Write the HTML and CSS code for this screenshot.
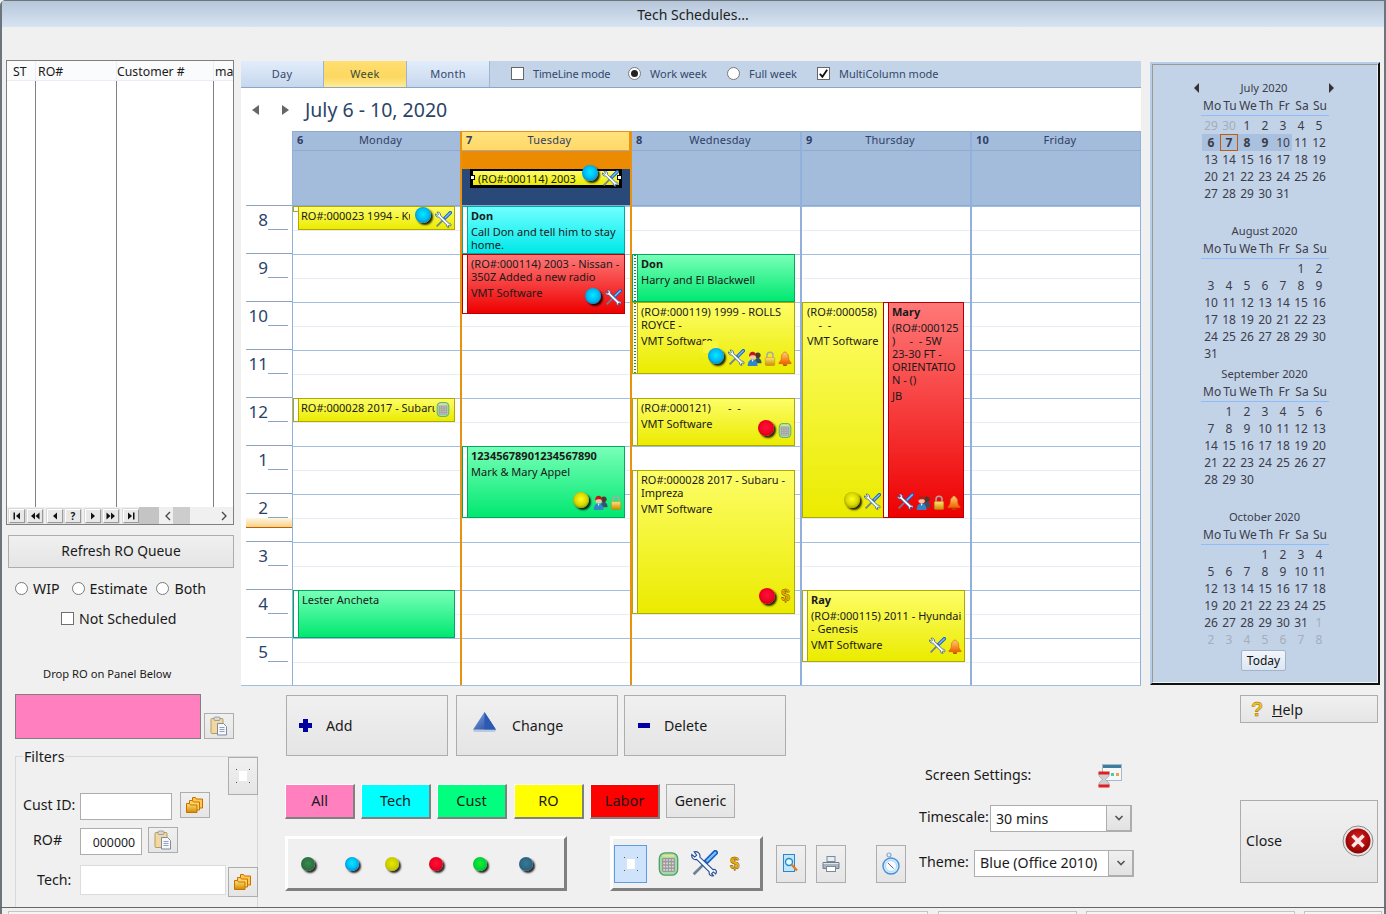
FILE: index.html
```html
<!DOCTYPE html>
<html lang="en">
<head>
<meta charset="utf-8">
<title>Tech Schedules...</title>
<link rel="stylesheet" href="styles.css">
</head>
<body>
<svg class="defs" width="0" height="0" aria-hidden="true">
  <defs>
    <linearGradient id="g-gold" x1="0" y1="0" x2="0" y2="1"><stop offset="0" stop-color="#ffe27a"/><stop offset="1" stop-color="#d08a00"/></linearGradient>
    <linearGradient id="g-bell" x1="0" y1="0" x2="0" y2="1"><stop offset="0" stop-color="#ffd27a"/><stop offset="1" stop-color="#f06000"/></linearGradient>
    <linearGradient id="g-tri" x1="0" y1="0" x2="1" y2="1"><stop offset="0" stop-color="#7fa8e8"/><stop offset="1" stop-color="#1c3f94"/></linearGradient>
    <radialGradient id="g-close" cx=".5" cy=".4" r=".6"><stop offset="0" stop-color="#e02020"/><stop offset="1" stop-color="#8c0000"/></radialGradient>
    <symbol id="i-tools" viewBox="0 0 20 20">
      <path d="M18 2 11 9" stroke="#1a5fc0" stroke-width="4" stroke-linecap="round" fill="none"/>
      <path d="M18 2 12 8" stroke="#7cc0ff" stroke-width="1.6" stroke-linecap="round" fill="none"/>
      <path d="M11 9 2 18" stroke="#6f7f95" stroke-width="2" fill="none"/>
      <path d="M2.500 1.500c2.600-.8 5 1.400 4.400 4l10.300 9.800c.9-.3 2 0 2.500 1 .4.900-.1 1.700-.5 2.300l-1.800-1.500-1.400 1.400 1.500 1.600c-2 .6-3.800-1-3.300-3L4.400 7.300C2.300 8 .2 6.200.6 3.600l2.300 1.900 1.500-1.500z" fill="#f4f8ff" stroke="#2b4f96" stroke-width=".9" transform="scale(.95)"/>
    </symbol>
    <symbol id="i-calc" viewBox="0 0 16 18">
      <rect x="1" y=".5" width="14" height="17" rx="4.500" fill="#a9d8a9" stroke="#4aa36a"/>
      <rect x="3.500" y="2" width="9" height="1.500" fill="#e8e28a"/>
      <rect x="3" y="4.500" width="10" height="10.500" rx="1" fill="#9a9a9a"/>
      <path d="M4 6h8M4 8.500h8M4 11h8M4 13.500h8" stroke="#d8d8d8" stroke-width="1.200" stroke-dasharray="1.400 .8"/>
    </symbol>
    <symbol id="i-people" viewBox="0 0 16 16">
      <circle cx="11.500" cy="4.500" r="3" fill="#4a3a30"/>
      <path d="M8 13c0-4 1.500-5.500 3.500-5.500S15.500 9 15.500 13z" fill="#38506a"/>
      <circle cx="6" cy="5.500" r="3.400" fill="#f0c8a8"/>
      <path d="M2.300 6C2 2 4.500.8 6 .8S10 2 9.700 6C8.500 4 4.500 4 2.300 6z" fill="#c01818"/>
      <path d="M.8 16c0-5 2.500-7.200 5.200-7.200s5.200 2.200 5.200 7.200z" fill="#2f86c8"/>
      <path d="M5 9h2l-1 3z" fill="#fff"/>
    </symbol>
    <symbol id="i-lock" viewBox="0 0 12 16">
      <path d="M2.800 8V4.500a3.200 3.200 0 0 1 6.400 0V8" fill="none" stroke="#a8a8a8" stroke-width="1.600"/>
      <rect x="1" y="7" width="10" height="8.500" rx="1" fill="url(#g-gold)" stroke="#b88a00" stroke-width=".5"/>
    </symbol>
    <symbol id="i-bell" viewBox="0 0 14 16">
      <path d="M7 1c1 0 1.500.6 1.500 1.300C10.500 3 11 5 11 8c0 2 1.500 3.500 2.500 4.500v1H.5v-1C1.500 11.500 3 10 3 8c0-3 .5-5 2.500-5.700C5.500 1.600 6 1 7 1z" fill="url(#g-bell)" stroke="#d85a00" stroke-width=".6"/>
      <path d="M4.500 14h5a2.500 2 0 0 1-5 0z" fill="#b84800"/>
    </symbol>
    <symbol id="i-folder" viewBox="0 0 18 18">
      <path d="M6.500 1.500h3l1 1.500h6v9h-10z" fill="#ffc850" stroke="#c87000"/>
      <path d="M3.500 4.500h3l1 1.500h6v8h-10z" fill="#ffd464" stroke="#c87000"/>
      <path d="M.5 7.500h3l1 1.500h6.500v7.500H.5z" fill="url(#g-gold)" stroke="#c87000"/>
    </symbol>
    <symbol id="i-clip" viewBox="0 0 18 20">
      <rect x="1" y="2.500" width="12" height="15" rx="1" fill="#f0d8a0" stroke="#b89a60"/>
      <rect x="4" y="1" width="6" height="3.500" rx="1" fill="#d8d8d8" stroke="#8a8a8a" stroke-width=".7"/>
      <path d="M7.500 7.500h6l3 3v8.500h-9z" fill="#f6f8fc" stroke="#7d8aa0"/>
      <path d="M9.500 11.500h5M9.500 13.500h5M9.500 15.500h5" stroke="#8ea0c0"/>
    </symbol>
    <symbol id="i-mag" viewBox="0 0 16 20">
      <rect x=".5" y=".5" width="11" height="17" fill="#bfe6fb" stroke="#2a86d0"/>
      <circle cx="6" cy="8" r="3.500" fill="#e8f8ff" stroke="#1f8ec8" stroke-width="1.400"/>
      <path d="M8.500 10.500 14 16.500" stroke="#e8781c" stroke-width="2.200"/>
    </symbol>
    <symbol id="i-print" viewBox="0 0 18 18">
      <rect x="5" y="1.500" width="8" height="5" fill="#e6eef4" stroke="#7a8a98"/>
      <path d="M1 7.500h16v6H1z" fill="#a8b4bf" stroke="#6f7d8a"/>
      <rect x="4.500" y="11.500" width="9" height="5" fill="#fff" stroke="#7a8a98"/>
      <path d="M1.500 8.500h15" stroke="#dfe6ec"/>
    </symbol>
    <symbol id="i-watch" viewBox="0 0 18 24">
      <circle cx="7" cy="3" r="2" fill="none" stroke="#86a6d8" stroke-width="1.200"/>
      <circle cx="9" cy="14" r="8" fill="#cfeaff" stroke="#4a90d8" stroke-width="1.400"/>
      <circle cx="9" cy="14" r="5.500" fill="#f4fbff" stroke="#9cc8ee" stroke-width=".7"/>
      <path d="M6 11l3 3" stroke="#c04848" stroke-width="1"/>
      <path d="M9 14l2.500 2.500" stroke="#3a6aa8" stroke-width="1"/>
    </symbol>
    <symbol id="i-settings" viewBox="0 0 24 24">
      <rect x="4.500" y=".5" width="19" height="16" fill="#f4f8fb" stroke="#a7b8c6"/>
      <rect x="5" y="1" width="18" height="3" fill="#3a7f9f"/>
      <rect x="13" y="9" width="3" height="3" fill="#50c8a0"/>
      <rect x="18" y="9" width="3" height="3" fill="#f0a040"/>
      <path d="M1 9h10v3L7.500 15.500 11 19v3H1v-3l3.500-3.500L1 12z" fill="#cfcfcf" stroke="#8a8a8a" stroke-width=".5"/>
      <rect x=".5" y="7.500" width="11" height="3" fill="#e02020"/>
      <rect x=".5" y="20.500" width="11" height="3" fill="#e02020"/>
    </symbol>
    <symbol id="i-close" viewBox="0 0 32 32">
      <circle cx="16" cy="16" r="15" fill="#e8e8e8" stroke="#8a8a8a"/>
      <circle cx="16" cy="16" r="12.500" fill="url(#g-close)"/>
      <path d="M10.500 10.500l11 11M21.500 10.500l-11 11" stroke="#f4e8e8" stroke-width="3.600"/>
    </symbol>
    <symbol id="i-tri" viewBox="0 0 22 20">
      <path d="M11 0 22 17H0z" fill="url(#g-tri)"/>
      <path d="M11 0 22 17H11z" fill="#2c59b4"/>
      <path d="M0 17h22l-1 2H1z" fill="#bcc8dc"/>
    </symbol>
    <symbol id="i-first" viewBox="0 0 10 10"><path d="M1.500 1.500h1.500v7H1.500zM8 1.500v7L4 5z"/></symbol>
    <symbol id="i-prevp" viewBox="0 0 10 10"><path d="M5 1.500v7L1 5zM9.500 1.500v7L5.500 5z"/></symbol>
    <symbol id="i-prev" viewBox="0 0 10 10"><path d="M7 1.500v7L3 5z"/></symbol>
    <symbol id="i-next" viewBox="0 0 10 10"><path d="M3 1.500v7L7 5z"/></symbol>
    <symbol id="i-nextp" viewBox="0 0 10 10"><path d="M.5 1.500v7l4-3.500zM5 1.500v7L9 5z"/></symbol>
    <symbol id="i-last" viewBox="0 0 10 10"><path d="M2 1.500v7L6 5zM7 1.500h1.500v7H7z"/></symbol>
    <symbol id="i-chev-l" viewBox="0 0 8 10"><path d="M6 1 2 5l4 4" fill="none" stroke="#444" stroke-width="1.300"/></symbol>
    <symbol id="i-chev-r" viewBox="0 0 8 10"><path d="M2 1l4 4-4 4" fill="none" stroke="#444" stroke-width="1.300"/></symbol>
    <symbol id="i-chev-d" viewBox="0 0 10 8"><path d="M1.500 2 5 5.500 8.500 2" fill="none" stroke="#555" stroke-width="1.600"/></symbol>
    <symbol id="i-check" viewBox="0 0 12 12"><path d="M2 6.500 4.800 9.500 10 2" fill="none" stroke="#111" stroke-width="2"/></symbol>
  </defs>
</svg>

<div class="window">
  <header class="titlebar">Tech Schedules...</header>

  <div class="upper">
    <section class="left-col">
      <div class="queue">
        <div class="queue-grid">
          <div class="qcol qcol-st"><div class="qhead">ST</div></div>
          <div class="qcol qcol-ro"><div class="qhead">RO#</div></div>
          <div class="qcol qcol-cust"><div class="qhead">Customer #</div></div>
          <div class="qcol qcol-ma"><div class="qhead">ma</div></div>
        </div>
        <div class="queue-foot">
          <div class="qnav">
            <span class="qbtn"><svg class="qglyph"><use href="#i-first"/></svg></span>
            <span class="qbtn"><svg class="qglyph"><use href="#i-prevp"/></svg></span>
            <span class="qbtn qbtn-sp"><svg class="qglyph"><use href="#i-prev"/></svg></span>
            <span class="qbtn">?</span>
            <span class="qbtn qbtn-sp"><svg class="qglyph"><use href="#i-next"/></svg></span>
            <span class="qbtn"><svg class="qglyph"><use href="#i-nextp"/></svg></span>
            <span class="qbtn qbtn-sp"><svg class="qglyph"><use href="#i-last"/></svg></span>
          </div>
          <div class="qgap"></div>
          <div class="qscroll">
            <svg class="qchev"><use href="#i-chev-l"/></svg>
            <span class="qthumb"></span>
            <svg class="qchev"><use href="#i-chev-r"/></svg>
          </div>
        </div>
      </div>
      <button class="btn btn-refresh">Refresh RO Queue</button>
      <div class="radios">
        <label class="opt"><i class="radio"></i>WIP</label>
        <label class="opt"><i class="radio"></i>Estimate</label>
        <label class="opt opt-both"><i class="radio"></i>Both</label>
      </div>
      <label class="opt notsched"><i class="check"></i>Not Scheduled</label>
      <div class="droplabel">Drop RO on Panel Below</div>
    </section>

    <section class="scheduler">
      <div class="sched-bar">
        <div class="tab">Day</div>
        <div class="tab tab-active">Week</div>
        <div class="tab">Month</div>
        <div class="sched-opts">
          <span class="sopt sopt-tl"><i class="check check-sm"></i>TimeLine mode</span>
          <span class="sopt sopt-ww"><i class="radio radio-on"></i>Work week</span>
          <span class="sopt sopt-fw"><i class="radio"></i>Full week</span>
          <span class="sopt sopt-mc"><i class="check check-sm"><svg class="checkmark"><use href="#i-check"/></svg></i>MultiColumn mode</span>
        </div>
      </div>
      <div class="sched-nav">
        <i class="tri tri-l"></i>
        <i class="tri tri-r"></i>
        <h1 class="date-title">July 6 - 10, 2020</h1>
      </div>
      <div class="sched-grid">
        <div class="times">
          <div class="hour"><span>8</span></div>
          <div class="hour"><span>9</span></div>
          <div class="hour"><span>10</span></div>
          <div class="hour"><span>11</span></div>
          <div class="hour"><span>12</span></div>
          <div class="hour"><span>1</span></div>
          <div class="hour hour-now"><span>2</span></div>
          <div class="hour"><span>3</span></div>
          <div class="hour"><span>4</span></div>
          <div class="hour"><span>5</span></div>
        </div>

        <div class="day day-mon">
          <div class="day-head"><b>6</b><span>Monday</span></div>
          <div class="allday"></div>
          <div class="day-body">
            <div class="ev ev-y ev-notag" style="top:0;height:24px;left:5px;width:157px"><i class="tag-mini"></i><div class="oneline oneline-a">RO#:000023 1994 - Ku</div><div class="icons icons-top"><i class="ball ball-cyan"></i><svg class="ic ic-tools"><use href="#i-tools"/></svg></div></div>
            <div class="ev ev-y" style="top:192px;height:24px;left:0;width:162px"><i class="tag"></i><div class="oneline oneline-b">RO#:000028 2017 - Subaru</div><div class="icons icons-top"><svg class="ic ic-calc"><use href="#i-calc"/></svg></div></div>
            <div class="ev ev-g" style="top:384px;height:48px;left:0;width:162px"><i class="tag"></i><div class="ev-text"><p>Lester Ancheta</p></div></div>
          </div>
        </div>

        <div class="day day-today">
          <div class="day-head"><b>7</b><span>Tuesday</span></div>
          <div class="allday">
            <div class="allday-orange"></div>
            <div class="allday-navy">
              <div class="adev">
                <i class="handle handle-l"></i><i class="handle handle-r"></i>
                <span>(RO#:000114) 2003</span>
                <i class="ball ball-cyan ball-clip"></i><svg class="ic ic-tools"><use href="#i-tools"/></svg>
              </div>
            </div>
          </div>
          <div class="day-body">
            <div class="ev ev-c" style="top:0;height:48px;left:0;width:163px"><i class="tag"></i><div class="ev-text"><p><b>Don</b></p><p>Call Don and tell him to stay<br>home.</p></div></div>
            <div class="ev ev-r" style="top:48px;height:60px;left:0;width:163px"><i class="tag"></i><div class="ev-text"><p>(RO#:000114) 2003 - Nissan -<br>350Z Added a new radio</p><p>VMT Software</p></div><div class="icons"><i class="ball ball-cyan"></i><svg class="ic ic-tools"><use href="#i-tools"/></svg></div></div>
            <div class="ev ev-g" style="top:240px;height:72px;left:0;width:163px"><i class="tag"></i><div class="ev-text"><p><b>12345678901234567890</b></p><p>Mark &amp; Mary Appel</p></div><div class="icons"><i class="ball ball-yellow"></i><svg class="ic ic-people"><use href="#i-people"/></svg><svg class="ic ic-lock"><use href="#i-lock"/></svg></div></div>
          </div>
        </div>

        <div class="day day-after-today">
          <div class="day-head"><b>8</b><span>Wednesday</span></div>
          <div class="allday"></div>
          <div class="day-body">
            <div class="ev ev-g" style="top:48px;height:48px;left:0;width:163px"><i class="tag tag-dots"></i><div class="ev-text"><p><b>Don</b></p><p>Harry and El Blackwell</p></div></div>
            <div class="ev ev-y" style="top:96px;height:72px;left:0;width:163px"><i class="tag tag-dots"></i><div class="ev-text"><p>(RO#:000119) 1999 - ROLLS<br>ROYCE -</p><p>VMT Software</p></div><i class="text-mask"></i><div class="icons"><i class="ball ball-cyan"></i><svg class="ic ic-tools"><use href="#i-tools"/></svg><svg class="ic ic-people"><use href="#i-people"/></svg><svg class="ic ic-lock"><use href="#i-lock"/></svg><svg class="ic ic-bell"><use href="#i-bell"/></svg></div></div>
            <div class="ev ev-y" style="top:192px;height:48px;left:0;width:163px"><i class="tag"></i><div class="ev-text"><p>(RO#:000121)&nbsp; &nbsp; &nbsp; -&nbsp; -</p><p>VMT Software</p></div><div class="icons"><i class="ball ball-red"></i><svg class="ic ic-calc"><use href="#i-calc"/></svg></div></div>
            <div class="ev ev-y" style="top:264px;height:144px;left:0;width:163px"><i class="tag"></i><div class="ev-text"><p>RO#:000028 2017 - Subaru -<br>Impreza</p><p>VMT Software</p></div><div class="icons"><i class="ball ball-red"></i><span class="dollar dollar-sm">$</span></div></div>
          </div>
        </div>

        <div class="day">
          <div class="day-head"><b>9</b><span>Thursday</span></div>
          <div class="allday"></div>
          <div class="day-body">
            <div class="ev ev-y ev-plain" style="top:96px;height:216px;left:0;width:82px"><div class="ev-text"><p>(RO#:000058)<br>&nbsp; &nbsp; -&nbsp; -</p><p>VMT Software</p></div><div class="icons"><i class="ball ball-yellow"></i><svg class="ic ic-tools"><use href="#i-tools"/></svg></div></div>
            <div class="ev ev-r" style="top:96px;height:216px;left:81px;width:81px"><i class="tag"></i><div class="ev-text"><p><b>Mary</b></p><p>(RO#:000125<br>)&nbsp; &nbsp; &nbsp;-&nbsp; - 5W<br>23-30 FT -<br>ORIENTATIO<br>N - ()</p><p>JB</p></div><div class="icons"><svg class="ic ic-tools"><use href="#i-tools"/></svg><svg class="ic ic-people"><use href="#i-people"/></svg><svg class="ic ic-lock"><use href="#i-lock"/></svg><svg class="ic ic-bell"><use href="#i-bell"/></svg></div></div>
            <div class="ev ev-y" style="top:384px;height:72px;left:0;width:163px"><i class="tag"></i><div class="ev-text"><p><b>Ray</b></p><p>(RO#:000115) 2011 - Hyundai<br>- Genesis</p><p>VMT Software</p></div><div class="icons"><svg class="ic ic-tools"><use href="#i-tools"/></svg><svg class="ic ic-bell"><use href="#i-bell"/></svg></div></div>
          </div>
        </div>

        <div class="day day-last">
          <div class="day-head"><b>10</b><span>Friday</span></div>
          <div class="allday"></div>
          <div class="day-body"></div>
        </div>
      </div>
    </section>

    <aside class="cal-panel">
      <div class="cal-inner">
        <div class="month">
          <div class="month-title month-title-nav"><i class="tri tri-l tri-dark"></i><span>July 2020</span><i class="tri tri-r tri-dark"></i></div>
          <div class="wk"><span>Mo</span><span>Tu</span><span>We</span><span>Th</span><span>Fr</span><span>Sa</span><span>Su</span></div>
          <div class="days">
            <span class="off">29</span><span class="off">30</span><span>1</span><span>2</span><span>3</span><span>4</span><span>5</span>
            <span class="sel b">6</span><span class="sel b now">7</span><span class="sel b">8</span><span class="sel b">9</span><span class="sel">10</span><span>11</span><span>12</span>
            <span>13</span><span>14</span><span>15</span><span>16</span><span>17</span><span>18</span><span>19</span>
            <span>20</span><span>21</span><span>22</span><span>23</span><span>24</span><span>25</span><span>26</span>
            <span>27</span><span>28</span><span>29</span><span>30</span><span>31</span>
          </div>
        </div>
        <div class="month">
          <div class="month-title">August 2020</div>
          <div class="wk"><span>Mo</span><span>Tu</span><span>We</span><span>Th</span><span>Fr</span><span>Sa</span><span>Su</span></div>
          <div class="days">
            <span></span><span></span><span></span><span></span><span></span><span>1</span><span>2</span>
            <span>3</span><span>4</span><span>5</span><span>6</span><span>7</span><span>8</span><span>9</span>
            <span>10</span><span>11</span><span>12</span><span>13</span><span>14</span><span>15</span><span>16</span>
            <span>17</span><span>18</span><span>19</span><span>20</span><span>21</span><span>22</span><span>23</span>
            <span>24</span><span>25</span><span>26</span><span>27</span><span>28</span><span>29</span><span>30</span>
            <span>31</span>
          </div>
        </div>
        <div class="month">
          <div class="month-title">September 2020</div>
          <div class="wk"><span>Mo</span><span>Tu</span><span>We</span><span>Th</span><span>Fr</span><span>Sa</span><span>Su</span></div>
          <div class="days">
            <span></span><span>1</span><span>2</span><span>3</span><span>4</span><span>5</span><span>6</span>
            <span>7</span><span>8</span><span>9</span><span>10</span><span>11</span><span>12</span><span>13</span>
            <span>14</span><span>15</span><span>16</span><span>17</span><span>18</span><span>19</span><span>20</span>
            <span>21</span><span>22</span><span>23</span><span>24</span><span>25</span><span>26</span><span>27</span>
            <span>28</span><span>29</span><span>30</span>
          </div>
        </div>
        <div class="month">
          <div class="month-title">October 2020</div>
          <div class="wk"><span>Mo</span><span>Tu</span><span>We</span><span>Th</span><span>Fr</span><span>Sa</span><span>Su</span></div>
          <div class="days">
            <span></span><span></span><span></span><span>1</span><span>2</span><span>3</span><span>4</span>
            <span>5</span><span>6</span><span>7</span><span>8</span><span>9</span><span>10</span><span>11</span>
            <span>12</span><span>13</span><span>14</span><span>15</span><span>16</span><span>17</span><span>18</span>
            <span>19</span><span>20</span><span>21</span><span>22</span><span>23</span><span>24</span><span>25</span>
            <span>26</span><span>27</span><span>28</span><span>29</span><span>30</span><span>31</span><span class="off">1</span>
            <span class="off">2</span><span class="off">3</span><span class="off">4</span><span class="off">5</span><span class="off">6</span><span class="off">7</span><span class="off">8</span>
          </div>
          <button class="today-btn">Today</button>
        </div>
      </div>
    </aside>
  </div>

  <div class="lower">
    <section class="lower-left">
      <div class="drop-row">
        <div class="drop-panel"></div>
        <button class="btn btn-icon btn-clip-drop"><svg class="ic-btn"><use href="#i-clip"/></svg></button>
      </div>
      <div class="filters">
        <div class="filter-top">
          <span class="legend">Filters</span>
          <button class="btn btn-dots"><i class="dotted"></i></button>
        </div>
        <div class="frow frow-cust">
          <label class="flabel flabel-cust">Cust ID:</label>
          <span class="field field-cust"></span>
          <button class="btn btn-icon"><svg class="ic-btn"><use href="#i-folder"/></svg></button>
        </div>
        <div class="frow frow-ro">
          <label class="flabel flabel-ro">RO#</label>
          <span class="field field-ro">000000</span>
          <button class="btn btn-icon"><svg class="ic-btn"><use href="#i-clip"/></svg></button>
        </div>
        <div class="frow frow-tech">
          <label class="flabel flabel-tech">Tech:</label>
          <span class="field field-tech"></span>
          <button class="btn btn-icon btn-tech"><svg class="ic-btn"><use href="#i-folder"/></svg></button>
        </div>
      </div>
    </section>

    <section class="lower-mid">
      <div class="action-row">
        <button class="btn btn-action"><span class="glyph-plus"></span><span class="lbl-add">Add</span></button>
        <button class="btn btn-action"><svg class="ic-tri"><use href="#i-tri"/></svg><span class="lbl-change">Change</span></button>
        <button class="btn btn-action btn-delete"><span class="glyph-minus"></span><span class="lbl-delete">Delete</span></button>
      </div>
      <div class="color-row">
        <button class="cbtn c-pink">All</button>
        <button class="cbtn c-cyan">Tech</button>
        <button class="cbtn c-green">Cust</button>
        <button class="cbtn c-yellow">RO</button>
        <button class="cbtn c-red">Labor</button>
        <button class="btn btn-generic">Generic</button>
      </div>
      <div class="tool-row">
        <div class="raised raised-dots">
          <i class="ball ball-sm ball-dgreen"></i>
          <i class="ball ball-sm ball-cyan"></i>
          <i class="ball ball-sm ball-olive tight"></i>
          <i class="ball ball-sm ball-red"></i>
          <i class="ball ball-sm ball-lgreen"></i>
          <i class="ball ball-sm ball-slate wide"></i>
        </div>
        <div class="raised raised-tools">
          <button class="tool-on"><i class="dotted"></i></button>
          <svg class="ic-tool ic-tool-calc"><use href="#i-calc"/></svg>
          <svg class="ic-tool ic-tool-wrench"><use href="#i-tools"/></svg>
          <span class="dollar">$</span>
        </div>
        <button class="btn btn-tall btn-mag"><svg class="ic-btn"><use href="#i-mag"/></svg></button>
        <button class="btn btn-tall btn-print"><svg class="ic-btn"><use href="#i-print"/></svg></button>
        <button class="btn btn-tall btn-watch"><svg class="ic-watch"><use href="#i-watch"/></svg></button>
      </div>
    </section>

    <section class="settings">
      <div class="set-screen"><span>Screen Settings:</span><svg class="ic-settings"><use href="#i-settings"/></svg></div>
      <div class="set-row set-time"><label>Timescale:</label><div class="combo combo-time"><span>30 mins</span><i class="combo-btn"><svg class="chev-d"><use href="#i-chev-d"/></svg></i></div></div>
      <div class="set-row set-theme"><label>Theme:</label><div class="combo combo-theme"><span>Blue (Office 2010)</span><i class="combo-btn"><svg class="chev-d"><use href="#i-chev-d"/></svg></i></div></div>
    </section>

    <section class="actions">
      <button class="btn btn-help"><span class="qmark">?</span><span class="help-text"><u>H</u>elp</span></button>
      <button class="btn btn-close"><span>Close</span><svg class="ic-close"><use href="#i-close"/></svg></button>
    </section>
  </div>

  <footer class="status">
    <span class="pane pane-1"></span>
    <span class="pane pane-2"></span>
    <span class="pane pane-3"></span>
    <span class="pane pane-4"></span>
  </footer>
</div>
</body>
</html>
```
FILE: styles.css
```css
* { box-sizing: border-box; }
html, body { margin: 0; padding: 0; }
body { width: 1386px; height: 914px; overflow: hidden; background: #f0f0f0; font-family: "Noto Sans", "Open Sans", sans-serif; color: #1a1a1a; }
.defs { position: absolute; }
button { font: inherit; color: inherit; padding: 0; margin: 0; }
p { margin: 0; }

.window { position: relative; width: 1386px; height: 914px; display: flex; flex-direction: column; background: #f0f0f0; border-top-left-radius: 6px; box-shadow: inset 2px 0 #6e747c, inset -2px 0 #6e747c, inset 0 1px #6e747c; overflow: hidden; }
.titlebar { height: 26px; flex: none; margin: 1px 2px 0; background: linear-gradient(#b6c6d9, #d6e3f2); text-align: center; font-size: 14px; line-height: 27px; color: #222; }

.upper { display: flex; height: 626px; flex: none; margin-top: 33px; }

/* left column */
.left-col { width: 241px; flex: none; padding-left: 6px; display: flex; flex-direction: column; }
.queue { width: 228px; height: 465px; border: 1px solid #808080; background: #fff; display: flex; flex-direction: column; }
.queue-grid { flex: 1; display: flex; min-height: 0; }
.qcol { border-right: 1px solid #808080; }
.qcol-st { width: 29px; }
.qcol-ro { width: 81px; }
.qcol-cust { width: 97px; }
.qcol-ma { flex: 1; border-right: 0; overflow: hidden; }
.qhead { height: 20px; background: #fafbfd; border-bottom: 1px solid #e8eef8; box-shadow: 1px 0 #e8eef8; font-size: 12.300px; line-height: 21px; white-space: nowrap; padding-left: 2px; }
.qcol-st .qhead { padding-left: 6px; }
.qcol-cust .qhead { padding-left: 0; }
.qcol-ma .qhead { padding-left: 1px; }
.queue-foot { height: 17px; flex: none; display: flex; background: #f0f0f0; }
.qnav { width: 132px; display: flex; gap: 2px; padding: 2px 0 0 2px; }
.qbtn { width: 16px; height: 14px; background: #e8e8e8; border: 1px solid #a8a8a8; border-color: #fff #9a9a9a #9a9a9a #fff; box-shadow: 0 0 0 .5px #c0c0c0; font-size: 10px; font-weight: 700; line-height: 12px; text-align: center; display: flex; align-items: center; justify-content: center; }
.qbtn-sp { margin-left: 2px; }
.qglyph { width: 10px; height: 10px; fill: #111; }
.qgap { width: 20px; background: #c4c4c4; }
.qscroll { flex: 1; display: flex; align-items: center; justify-content: space-between; padding: 0 5px; background: #f0f0f0; }
.qchev { width: 8px; height: 10px; }
.qthumb { width: 17px; height: 100%; background: #cdcdcd; margin-left: -1px; margin-right: 29px; }
.btn { background: linear-gradient(#f0f0f0, #e5e5e5); border: 1px solid #adadad; cursor: default; }
.btn-refresh { width: 226px; height: 33px; margin: 10px 0 0 2px; font-size: 13.800px; text-align: center; flex: none; padding-bottom: 3px; }
.opt { display: flex; align-items: center; gap: 5px; font-size: 14.200px; height: 20px; }
.opt-both { margin-left: -3px; }
.radio { width: 13px; height: 13px; border-radius: 50%; border: 1px solid #7a7a7a; background: #fff; display: block; flex: none; position: relative; }
.radio-on::after { content: ""; position: absolute; left: 2px; top: 2px; width: 7px; height: 7px; border-radius: 50%; background: #222; }
.check { width: 13px; height: 13px; border: 1px solid #707070; background: #fff; display: block; flex: none; position: relative; }
.checkmark { position: absolute; left: 0; top: 0; width: 11px; height: 11px; }
.radios { display: flex; gap: 12px; margin: 10px 0 0 9px; }
.notsched { margin: 10px 0 0 55px; }
.droplabel { font-size: 11.200px; line-height: 16px; margin: 38px 0 0 37px; }

/* scheduler */
.scheduler { width: 900px; height: 625px; margin-top: 1px; background: #fff; flex: none; display: flex; flex-direction: column; }
.sched-bar { height: 27px; flex: none; display: flex; background: #c3d4e8; border-bottom: 1px solid #8ba6c6; font-size: 11px; color: #33486c; }
.tab { width: 83px; line-height: 26px; text-align: center; background: linear-gradient(#e2edfb, #c6d7ed); border-right: 1px solid #9db5d2; letter-spacing: .3px; }
.tab-active { background: linear-gradient(#ffdf72 0%, #fdd860 60%, #ffeb98 100%); color: #3b4a3a; }
.sched-opts { display: flex; align-items: center; flex: 1; padding: 0 0 1px 21px; }
.sopt { display: flex; align-items: center; }
.sopt .check, .sopt .radio { margin-right: 9px; }
.check-sm { border-color: #666; }
.sopt-tl { width: 117px; letter-spacing: -.2px; }
.sopt-ww { width: 99px; }
.sopt-fw { width: 90px; }
.sched-nav { height: 43px; flex: none; display: flex; align-items: center; padding-left: 11px; }
.tri { display: block; width: 0; height: 0; border-style: solid; border-color: transparent; flex: none; }
.tri-l { border-width: 5px 7px 5px 0; border-right-color: #666; }
.tri-r { border-width: 5px 0 5px 7px; border-left-color: #666; margin-left: 23px; }
.date-title { margin: 0 0 0 16px; font-size: 19.500px; font-weight: 400; color: #2b4368; white-space: nowrap; }
.sched-grid { flex: 1; display: grid; grid-template-columns: 51px 168px 170px 170px 170px 171px; min-height: 0; border-bottom: 1px solid #a1bde0; }
.times { padding: 74px 0 0 5px; overflow: hidden; }
.hour { height: 48px; border-top: 1px solid #8ea4c4; width: 46px; position: relative; color: #2b4368; font-size: 17px; }
.hour span { display: block; width: 22px; text-align: right; padding-top: 3px; line-height: 22px; height: 24px; }
.hour::after { content: ""; position: absolute; left: 22px; right: 4px; top: 23px; height: 1px; background: #8ea4c4; }
.hour-now::before { content: ""; position: absolute; left: 0; right: 0; top: 24px; height: 9px; background: linear-gradient(#fff6e2, #f8d288); border-bottom: 1px solid #c26000; }
.day { border-left: 2px solid #92b0dc; display: flex; flex-direction: column; min-width: 0; }
.day-mon { border-left-width: 1px; }
.day-today, .day-after-today { border-left-color: #e8920f; }
.day-last { border-right: 1px solid #92b0dc; }
.day-head { height: 20px; flex: none; display: flex; background: #a3bcdc; border: 1px solid #8faad0; border-left: 0; border-right: 0; font-size: 11px; color: #2f4066; line-height: 16px; letter-spacing: .2px; position: relative; }
.day-head b { position: absolute; left: 4px; }
.day-head span { flex: 1; text-align: center; padding-left: 8px; }
.allday { height: 55px; flex: none; background: #a3bcdc; border-bottom: 1px solid #8faad0; }
.day-today .day-head { background: linear-gradient(#ffe27c, #ffd868); border: 1px solid #e8920f; border-left: 0; border-bottom-color: #a9a9a9; }
.day-today .allday { display: flex; flex-direction: column; background: #294a78; }
.allday-orange { height: 18px; background: #ec8a00; flex: none; }
.allday-navy { flex: 1; padding: 0 0 0 8px; }
.adev { position: relative; width: 152px; height: 19px; border: 3px solid #000; border-width: 2px 3px 3px; background: linear-gradient(#fdfd68, #ebeb00); display: flex; align-items: center; font-size: 11px; padding-left: 5px; color: #1a1a1a; }
.adev span { width: 106px; }
.adev .ic-tools { margin-left: 2px; }
.ball-clip { margin-top: -8px; }
.handle { position: absolute; top: 4px; width: 5px; height: 5px; background: #fff; border: 1px solid #000; }
.handle-l { left: -3px; }
.handle-r { right: -3px; }
.day-body { flex: 1; position: relative; background: repeating-linear-gradient(to bottom, #a1bde0 0, #a1bde0 1px, #fff 1px, #fff 24px, #e6edf5 24px, #e6edf5 25px, #fff 25px, #fff 48px); }

/* events */
.ev { position: absolute; border: 1px solid; font-size: 11px; line-height: 13px; color: #1a1a1a; overflow: hidden; display: flex; }
.ev-y { border-color: #b0a800; background: linear-gradient(#fdfd68, #ebeb00); }
.ev-c { border-color: #00a8a0; background: linear-gradient(#70ffff, #00e8e8); }
.ev-r { border-color: #b80000; background: linear-gradient(#ff7878, #ee0000); }
.ev-g { border-color: #00a860; background: linear-gradient(#78ffb8, #00e870); }
.ev-notag { overflow: visible; }
.tag { width: 5px; flex: none; background: #fff; border-right: 1px solid; border-color: inherit; }
.tag-dots { background-image: repeating-linear-gradient(to bottom, #1a8a50 0, #1a8a50 1px, #fff 1px, #fff 3px); background-size: 2px 100%; background-repeat: repeat-y; background-position: center; }
.tag-mini { position: absolute; left: -6px; top: -1px; width: 6px; height: 6px; background: #fff; border: 1px solid #b0a800; }
.ev-text { padding: 2px 0 0 3px; flex: 1; white-space: nowrap; }
.ev-plain .ev-text { padding-left: 4px; }
.ev-text p { margin-bottom: 3px; }
.oneline { white-space: nowrap; overflow: hidden; padding: 2px 0 0 2px; }
.oneline-a { width: 111px; }
.oneline-b { width: 136px; }
.icons { position: absolute; right: 2px; bottom: 7px; display: flex; align-items: flex-end; gap: 2px; }
.icons-top { top: 0; bottom: auto; align-items: flex-start; }
.ic { display: block; flex: none; }
.ic-tools { width: 17px; height: 17px; }
.ic-calc { width: 14px; height: 15px; }
.ic-people { width: 15px; height: 15px; }
.ic-lock { width: 12px; height: 15px; }
.ic-bell { width: 14px; height: 15px; }
.icons-top .ic-tools { margin-top: 4px; }
.icons-top .ic-calc { margin: 3px 2px 0 0; }
.text-mask { position: absolute; left: 70px; top: 38px; width: 15px; height: 12px; background: #f6f63a; }
.ball { display: block; width: 16px; height: 16px; border-radius: 50%; box-shadow: 2px 2px 2px rgba(0, 0, 0, .85); flex: none; margin-right: 2px; margin-bottom: 2px; }
.ball-cyan { background: radial-gradient(circle at 50% 45%, #00ecff 0, #00b8f4 50%, #005c9c 100%); }
.ball-yellow { background: radial-gradient(circle at 50% 45%, #ffff20 0, #d8d800 50%, #606000 100%); }
.ball-red { background: radial-gradient(circle at 50% 45%, #ff1040 0, #f00020 55%, #800010 100%); }
.ball-dgreen { background: radial-gradient(circle at 50% 45%, #3a8a50 0, #2c7040 60%, #1c4a28 100%); }
.ball-olive { background: radial-gradient(circle at 50% 45%, #e8e800 0, #c8c800 60%, #707000 100%); }
.ball-lgreen { background: radial-gradient(circle at 50% 45%, #10f040 0, #00d030 60%, #008020 100%); }
.ball-slate { background: radial-gradient(circle at 50% 45%, #3a7898 0, #2c6480 60%, #1c4058 100%); }

/* calendar panel */
.cal-panel { width: 230px; height: 623px; margin: 2px 0 0 9px; flex: none; border: 2px solid; border-color: #b8cde8 #111 #111 #b8cde8; }
.cal-inner { height: 100%; background: #c2d3e8; border: 1px solid; border-color: #999 #eef2f7 #eef2f7 #999; padding-top: 15px; display: flex; flex-direction: column; align-items: center; font-size: 12px; color: #3c3c4a; }
.month { width: 126px; height: 143px; flex: none; }
.month-title { height: 16px; line-height: 16px; text-align: center; white-space: nowrap; font-size: 11.200px; padding-right: 1px; }
.month-title-nav { display: flex; align-items: center; justify-content: space-between; margin: 0 -7px 0 -8px; }
.tri-dark.tri-l { border-right-color: #333; border-width: 5px 5px 5px 0; }
.tri-dark.tri-r { border-left-color: #333; border-width: 5px 0 5px 5px; margin: 0; }
.wk { display: grid; grid-template-columns: repeat(7, 18px); height: 19px; margin: 1px -1px 1px; border-bottom: 1px solid #8ebcff; line-height: 17px; text-align: center; padding-left: 2px; width: 128px; white-space: nowrap; }
.days { display: grid; grid-template-columns: repeat(7, 18px); grid-auto-rows: 17px; line-height: 17px; text-align: center; }
.days .off { color: #a6adb8; }
.days .sel { background: #a9c0de; }
.days .b { font-weight: 700; }
.days .now { outline: 1px solid #c05a10; outline-offset: -1px; }
.today-btn { display: block; width: 45px; height: 21px; margin: 2px 0 0 39px; font-size: 12px; background: linear-gradient(#f2f6fb, #dbe6f3); border: 1px solid #a4b4c8; border-radius: 2px; color: #111; }

/* lower area */
.lower { height: 221px; flex: none; display: flex; }
.lower-left { width: 258px; padding-left: 15px; flex: none; }
.drop-row { display: flex; align-items: flex-end; gap: 3px; margin-top: 8px; }
.drop-panel { width: 186px; height: 45px; background: #ff7fbf; border: 1px solid #808080; }
.btn-icon { width: 30px; height: 26px; display: flex; align-items: center; justify-content: center; flex: none; }
.ic-btn { width: 18px; height: 20px; display: block; }
.filters { margin-top: 17px; height: 152px; border: 1px solid #d8d8d8; border-bottom: 0; font-size: 14.200px; }
.filter-top { height: 35px; display: flex; justify-content: space-between; align-items: flex-start; }
.legend { margin: -10px 0 0 7px; padding: 0 1px; background: #f0f0f0; line-height: 20px; }
.btn-dots { width: 30px; height: 38px; margin-right: -1px; flex: none; display: flex; align-items: center; justify-content: center; position: relative; z-index: 1; }
.dotted { display: block; width: 14px; height: 14px; background: linear-gradient(#555, #555) 0 0 / 1px 1px no-repeat, linear-gradient(#555, #555) 100% 0 / 1px 1px no-repeat, linear-gradient(#555, #555) 0 100% / 1px 1px no-repeat, linear-gradient(#555, #555) 100% 100% / 1px 1px no-repeat, linear-gradient(#fff, #fff) center / 8px 10px no-repeat; }
.frow { display: flex; align-items: flex-start; }
.flabel { width: 64px; flex: none; line-height: 20px; }
.field { display: block; background: #fff; border: 1px solid #adadad; flex: none; }
.frow-cust { height: 35px; }
.frow-cust .flabel { padding: 3px 0 0 7px; }
.field-cust { width: 92px; height: 27px; margin-top: 1px; }
.frow-cust .btn-icon { margin-left: 8px; }
.frow-ro { height: 38px; }
.flabel-ro { padding: 3px 0 0 17px; }
.field-ro { width: 62px; height: 27px; margin-top: 1px; font-size: 12.300px; line-height: 27px; text-align: right; padding-right: 6px; }
.frow-ro .btn-icon { margin-left: 6px; }
.flabel-tech { padding: 5px 0 0 21px; }
.field-tech { width: 146px; height: 30px; border-color: #dcdcdc; }
.btn-tech { margin: 2px -1px 0 2px; height: 30px; position: relative; z-index: 1; }

.lower-mid { width: 648px; padding-left: 27px; flex: none; }
.action-row { display: flex; margin: 9px 0 0 1px; }
.btn-action { width: 162px; height: 61px; margin-right: 8px; display: flex; align-items: center; font-size: 14.200px; padding: 0 0 1px; text-align: left; }
.btn-delete { margin-left: -2px; }
.glyph-plus { display: block; width: 13px; height: 13px; margin-left: 12px; background: linear-gradient(#0000a0, #0000a0) center/13px 5px no-repeat, linear-gradient(#0000a0, #0000a0) center/5px 13px no-repeat; }
.lbl-add { margin-left: 14px; }
.ic-tri { width: 23px; height: 21px; display: block; margin: -6px 0 0 16px; }
.lbl-change { margin-left: 16px; }
.glyph-minus { display: block; width: 12px; height: 5px; margin-left: 13px; background: #0000a0; }
.lbl-delete { margin-left: 14px; }
.color-row { display: flex; margin-top: 28px; gap: 6px; }
.cbtn { width: 70px; height: 35px; border: 1px solid; border-color: #fff #808080 #808080 #fff; border-width: 1px 2px 2px 1px; font-size: 14.500px; text-align: center; cursor: default; padding-bottom: 2px; }
.c-pink { background: #ff7fbf; }
.c-cyan { background: #00ffff; }
.c-green { background: #00ff7f; margin-right: 1px; }
.c-yellow { background: #ffff00; }
.c-red { background: #ff0000; }
.btn-generic { width: 69px; height: 34px; font-size: 14.200px; padding-bottom: 2px; }
.tool-row { display: flex; align-items: center; margin-top: 17px; height: 55px; }
.raised { height: 55px; flex: none; background: #f0f0f0; border: 3px solid; border-color: #fff #808080 #808080 #fff; display: flex; align-items: center; }
.raised-dots { width: 282px; padding-left: 13px; gap: 30px; }
.ball-sm { width: 14px; height: 14px; margin: 0; }
.tight { margin-left: -4px; }
.wide { margin-left: 2px; }
.raised-tools { width: 153px; margin-left: 43px; padding-left: 1px; }
.tool-on { width: 33px; height: 38px; background: #cfe4fb; border: 1px solid #5a9ce8; display: flex; align-items: center; justify-content: center; }
.ic-tool { display: block; flex: none; }
.ic-tool-calc { width: 21px; height: 26px; margin-left: 11px; }
.ic-tool-wrench { width: 27px; height: 27px; margin-left: 12px; }
.dollar { font-family: "Liberation Sans", sans-serif; font-size: 17px; font-weight: 700; color: #f4b400; -webkit-text-stroke: .4px #6a4400; margin-left: 12px; line-height: 20px; }
.dollar-sm { font-size: 16px; margin: 0 2px 0 2px; }
.btn-tall { width: 30px; height: 38px; display: flex; align-items: center; justify-content: center; flex: none; }
.btn-mag { margin-left: 13px; }
.btn-print { margin-left: 10px; }
.btn-watch { margin-left: 30px; }
.ic-watch { width: 18px; height: 24px; display: block; }

.settings { width: 228px; padding: 78px 0 0 13px; flex: none; font-size: 14.200px; }
.set-screen { height: 24px; display: flex; justify-content: space-between; align-items: center; padding: 0 12px 0 6px; width: 215px; }
.set-screen span { margin-top: -4px; }
.ic-settings { width: 24px; height: 24px; display: block; }
.set-row { display: flex; align-items: center; }
.set-row label { line-height: 20px; }
.set-time { margin-top: 17px; }
.set-time label { width: 71px; margin-top: -4px; }
.set-theme { margin-top: 18px; }
.set-theme label { width: 55px; margin-top: -4px; }
.combo { display: flex; height: 27px; background: #fff; border: 1px solid #adadad; align-items: stretch; line-height: 25px; }
.combo span { flex: 1; padding-left: 5px; white-space: nowrap; }
.combo-theme span { line-height: 24px; }
.combo-time { width: 142px; }
.combo-theme { width: 160px; }
.combo-btn { width: 25px; flex: none; background: linear-gradient(#f0f0f0, #e2e2e2); border-left: 1px solid #adadad; border-right: 1px solid #adadad; border-bottom: 1px solid #adadad; display: flex; align-items: center; justify-content: center; }
.chev-d { width: 10px; height: 8px; display: block; }

.actions { width: 138px; padding-top: 9px; margin-left: 106px; flex: none; }
.btn-help { width: 138px; height: 28px; display: flex; align-items: center; font-size: 14.200px; text-align: left; }
.qmark { font-family: "Liberation Sans", sans-serif; font-size: 20px; font-weight: 700; color: #f4c020; -webkit-text-stroke: .4px #8a6a00; margin-left: 10px; line-height: 20px; width: 21px; }
.btn-close { width: 138px; height: 83px; margin-top: 77px; display: flex; align-items: center; justify-content: space-between; padding: 0 3px 2px 5px; font-size: 14.200px; text-align: left; }
.ic-close { width: 32px; height: 32px; display: block; }

.status { height: 7px; flex: none; border-top: 1px solid #666; display: flex; padding: 3px 0 0 8px; }
.pane { display: block; border: 1px solid #c4c4c4; border-bottom: 0; height: 4px; background: #f4f4f4; }
.pane-1 { width: 920px; }
.pane-2 { width: 139px; margin-left: 10px; }
.pane-3 { width: 209px; margin-left: 9px; }
.pane-4 { width: 78px; margin-left: 9px; }
```
